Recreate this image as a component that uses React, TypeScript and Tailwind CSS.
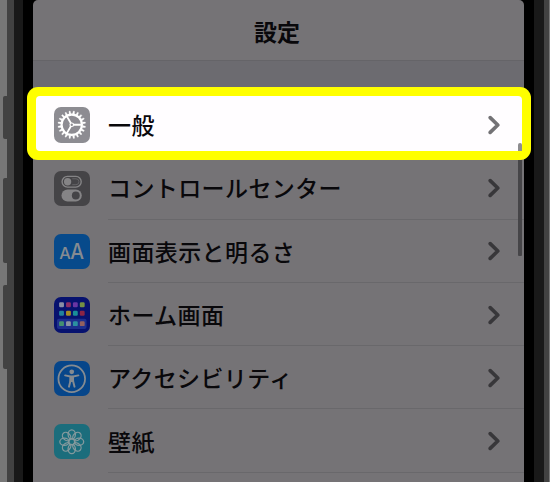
import type { ReactNode } from "react";

function GearIcon() {
  return (
    <svg viewBox="0 0 36 36" className="h-full w-full" fill="none" stroke="#fff">
      {Array.from({ length: 20 }).map((_, i) => (
        <path
          key={i}
          d="M17 7 L17.4 4 H18.6 L19 7 Z"
          fill="#fff"
          strokeWidth="0.3"
          transform={`rotate(${i * 18 + 9} 18 18)`}
        />
      ))}
      <circle cx="18" cy="18" r="10.3" strokeWidth="2.2" />
      <path d="M18 18H28.5M18 18L12.8 9M18 18L12.8 27" strokeWidth="1.9" />
      <circle cx="18" cy="18" r="1.8" fill="#8d8c92" strokeWidth="1.2" />
    </svg>
  );
}

function TogglesIcon() {
  return (
    <svg viewBox="0 0 36 36" className="h-full w-full" fill="none">
      <rect x="8.2" y="5.5" width="19.4" height="10.8" rx="5.4" stroke="#858486" strokeWidth="1.4" />
      <circle cx="13.8" cy="10.9" r="3.7" fill="#858486" />
      <path d="M18.5 7.9H22.3A3 3 0 0 1 22.3 13.9H18.5" stroke="#737275" strokeWidth="0.7" />
      <rect x="7.6" y="18.8" width="20.6" height="12.2" rx="6.1" fill="#858486" />
      <circle cx="22.1" cy="24.9" r="4" fill="#454447" />
    </svg>
  );
}

function TextSizeIcon() {
  return (
    <svg viewBox="0 0 36 36" className="h-full w-full" fill="#858b91" fontFamily="Inter, sans-serif">
      <text x="5.2" y="25.6" fontSize="16.5" fontWeight="500">A</text>
      <text x="16.6" y="25.6" fontSize="21.5" fontWeight="500" textLength="14" lengthAdjust="spacingAndGlyphs">A</text>
    </svg>
  );
}

const appColors = [
  ["#8a8fa5", "#8d2f67", "#6a35a4", "#749044"],
  ["#22829d", "#a78b25", "#198e98", "#8b2445"],
  ["#449071", "#8d93a1", "#2b91a0", "#93605f"],
];

function HomeScreenIcon() {
  return (
    <svg viewBox="0 0 36 36" className="h-full w-full">
      <rect x="3" y="22" width="30" height="10.5" rx="2" fill="#1d2f8e" />
      {appColors.map((row, r) =>
        row.map((color, c) => (
          <rect
            key={`${r}-${c}`}
            x={5.2 + c * 7}
            y={[5.4, 14, 24.6][r]}
            width="4.9"
            height="4.9"
            rx="1.2"
            fill={color}
          />
        ))
      )}
    </svg>
  );
}

function AccessibilityIcon() {
  return (
    <svg viewBox="0 0 36 36" className="h-full w-full" fill="none" stroke="#858b91">
      <circle cx="18" cy="18" r="13.5" strokeWidth="1.8" />
      <circle cx="18" cy="11" r="2.4" fill="#858b91" stroke="none" />
      <path d="M11.3 14.6L16.5 15.7H19.5L24.7 14.6" strokeWidth="2" strokeLinecap="round" strokeLinejoin="round" />
      <path d="M19.2 16L19.4 20.5L20.8 26M16.8 16L16.6 20.5L15.2 26" strokeWidth="2" strokeLinecap="round" strokeLinejoin="round" />
      <path d="M16 15.5H20L20.2 21.2H15.8Z" fill="#858b91" stroke="none" />
    </svg>
  );
}

function FlowerIcon() {
  return (
    <svg viewBox="0 0 36 36" className="h-full w-full" fill="none" stroke="#84999d">
      {Array.from({ length: 8 }).map((_, i) => (
        <ellipse
          key={i}
          cx="18"
          cy="10.6"
          rx="3.7"
          ry="4.7"
          strokeWidth="1.3"
          transform={`rotate(${i * 45} 18 18)`}
        />
      ))}
      <circle cx="18" cy="18" r="3.2" strokeWidth="1.1" />
    </svg>
  );
}

function Chevron({ className }: { className: string }) {
  return (
    <svg viewBox="0 0 12 20" className={`h-5 w-3 ${className}`} fill="none" stroke="currentColor">
      <path d="M2.2 2.6L9.8 10L2.2 17.4" strokeWidth="3.6" strokeLinecap="round" strokeLinejoin="round" />
    </svg>
  );
}

interface SettingsItem {
  label: string;
  icon: ReactNode;
  iconClass: string;
  active?: boolean;
}

const items: SettingsItem[] = [
  { label: "一般", icon: <GearIcon />, iconClass: "bg-[#8d8c92]", active: true },
  { label: "コントロールセンター", icon: <TogglesIcon />, iconClass: "bg-[#454447]" },
  { label: "画面表示と明るさ", icon: <TextSizeIcon />, iconClass: "bg-[#074a8b]" },
  { label: "ホーム画面", icon: <HomeScreenIcon />, iconClass: "bg-[#07126f]" },
  { label: "アクセシビリティ", icon: <AccessibilityIcon />, iconClass: "bg-[#07468a]" },
  { label: "壁紙", icon: <FlowerIcon />, iconClass: "bg-[#1b6d7c]" },
];

function SettingsRow({ label, icon, iconClass, active }: SettingsItem) {
  return (
    <li className="relative flex h-[63.3px] items-center pl-[21px]">
      {active && (
        <div className="absolute -inset-x-1.5 -top-1.5 h-[73px] w-[504px] rounded-[11px] bg-[#ffff00] p-[9px]">
          <div className="h-full rounded-[4px] bg-[#fffdff]" />
        </div>
      )}
      <div className={`relative mt-px size-[35.5px] shrink-0 overflow-hidden rounded-[7px] ${iconClass}`}>
        {icon}
      </div>
      <div
        className={`relative ml-[18.5px] flex h-full flex-1 items-center justify-between border-b pt-px pr-6 ${
          active ? "border-transparent" : "border-[#69686b]"
        }`}
      >
        <span className="text-[23px] leading-none font-medium tracking-[0.4px] whitespace-nowrap">
          {label}
        </span>
        <Chevron className={active ? "text-[#737275]" : "text-[#38373a]"} />
      </div>
    </li>
  );
}

export default function App() {
  return (
    <div
      lang="ja"
      className="flex h-[482px] w-[550px] overflow-hidden bg-[#777777] font-['Noto_Sans_CJK_JP',sans-serif] text-[#09080b]"
    >
      {/* hardware buttons */}
      <div className="flex w-[7px] shrink-0 flex-col pt-24 pl-[3px]">
        <div className="h-[43px] rounded-l-[2px] bg-[#424242]" />
        <div className="mt-[39px] h-[85px] rounded-l-[2px] bg-[#424242]" />
        <div className="mt-[22px] h-[84px] rounded-l-[2px] bg-[#424242]" />
      </div>

      <div className="w-[542px] shrink-0 border-r-[5px] border-l-[7px] border-[#424242] bg-[#191919] pr-[10px] pl-[9px]">
        <div className="h-full bg-black px-[10px]">
          <div className="relative h-full w-[491px] rounded-t-[5px] bg-[#757376]">
            <header className="flex h-[61px] items-center justify-center border-b border-[#656468] pt-[3px] pr-[3px]">
              <h1 className="text-[23px] leading-none font-bold">設定</h1>
            </header>
            <div className="h-8 bg-[#6c6b70]" />
            <ul>
              {items.map((item) => (
                <SettingsRow key={item.label} {...item} />
              ))}
            </ul>

            {/* scroll indicator, its top end lies over the highlighted row */}
            <div className="absolute top-[143px] right-[2px] flex w-1 flex-col gap-[9px]">
              <div className="h-2 rounded-t-[2px] bg-[#8d8c8f]" />
              <div className="h-24 rounded-b-[1px] bg-[#464548]" />
            </div>
          </div>
        </div>
      </div>
    </div>
  );
}
